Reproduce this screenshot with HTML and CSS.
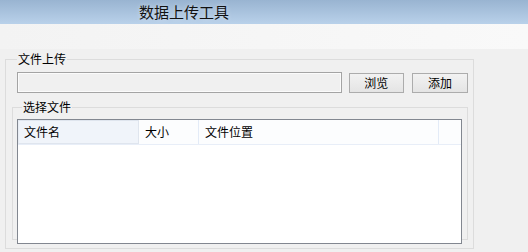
FILE: index.html
```html
<!DOCTYPE html>
<html lang="zh-CN">
<head>
    <meta charset="UTF-8">
    <title>数据上传工具</title>
    <link rel="stylesheet" href="styles.css">
</head>
<body>
    <div class="titlebar">数据上传工具</div>
    <div class="toolbar"></div>

    <div class="main">
        <fieldset class="group outer">
            <legend>文件上传</legend>
            <div class="upload-row">
                <input class="path-input" type="text" readonly>
                <button class="btn">浏览</button>
                <button class="btn">添加</button>
            </div>

            <fieldset class="group inner">
                <legend>选择文件</legend>
                <div class="listview">
                    <div class="list-header">
                        <div class="col col-name active">文件名</div>
                        <div class="col col-size">大小</div>
                        <div class="col col-path">文件位置</div>
                        <div class="col col-rest"></div>
                    </div>
                </div>
            </fieldset>
        </fieldset>
    </div>
</body>
</html>
```

FILE: styles.css
```css
* {
    margin: 0;
    padding: 0;
    box-sizing: border-box;
    font-family: "Noto Sans CJK SC", "Noto Sans", sans-serif;
}

body {
    background: #f0f0f0;
    color: #000;
    font-size: 12px;
    width: 528px;
    height: 252px;
    overflow: hidden;
}

.titlebar {
    height: 24px;
    background: linear-gradient(to bottom, #99b4d1 0%, #b9d1ea 100%);
    padding-left: 139px;
    font-size: 15px;
    line-height: 24px;
    color: #111;
    text-shadow: 0 0 5px rgba(255, 255, 255, 0.5);
}

.toolbar {
    height: 25px;
    background: linear-gradient(to right, #f3f3f3 0%, #f6f6f6 50%, #f9f9f9 100%);
}

.main {
    padding: 3px 0 0 5px;
}

.group {
    border: 1px solid #dcdcdc;
    min-width: 0;
}

.group legend {
    padding: 0 1px;
    line-height: 14px;
    height: 14px;
}

.outer {
    width: 469px;
    height: 197px;
    padding: 0 5px 2px 6px;
}

.outer > legend {
    margin-left: 5px;
}

.upload-row {
    display: flex;
    align-items: center;
    gap: 7px;
    margin: 6px 0 0 5px;
    height: 21px;
}

.path-input {
    width: 326px;
    height: 21px;
    border: 1px solid #a4a4a4;
    box-shadow: inset 0 0 0 1px #fbfbfb;
    background: #f0f0f0;
    outline: none;
}

.btn {
    width: 56px;
    height: 20px;
    border: 1px solid #acacac;
    background: linear-gradient(to bottom, #f2f2f2 0%, #e4e4e4 100%);
    font-size: 12px;
    line-height: 18px;
    margin-top: 1px;
}

.btn + .btn {
    margin-left: 1px;
}

.inner {
    margin-top: 7px;
    height: 140px;
    padding: 0 5px 2px 4px;
}

.inner > legend {
    margin-left: 5px;
}

.listview {
    margin-top: 5px;
    height: 125px;
    border: 1px solid #828790;
    background: #fff;
}

.list-header {
    display: flex;
    height: 25px;
    border-bottom: 1px solid #e8eef8;
    background: #fcfdfe;
}

.col {
    line-height: 24px;
    padding-left: 6px;
    border-right: 1px solid #e3ebf7;
}

.col-name {
    width: 121px;
}

.col-name.active {
    background: #f0f4fa;
    border: 1px solid #dfe5ee;
    border-left-color: #e8edf4;
    line-height: 22px;
    padding-left: 5px;
}

.col-size {
    width: 60px;
}

.col-path {
    width: 240px;
}

.col-rest {
    flex: 1;
    border-right: none;
}
```
